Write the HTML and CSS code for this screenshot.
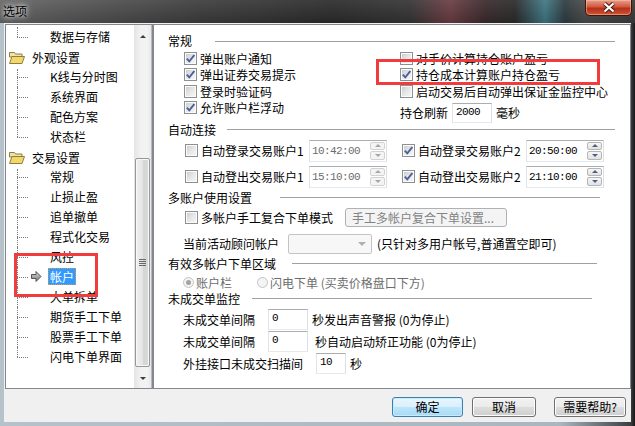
FILE: index.html
```html
<!DOCTYPE html>
<html lang="zh-CN">
  <head>
    <meta charset="UTF-8" />
    <meta name="viewport" content="width=device-width, initial-scale=1.0" />
    <title>选项</title>
    <link rel="stylesheet" href="styles.css">
  </head>

  <body>
    <div class="window">
      <div class="titlebar">
        <span class="title">选项</span>
        <div class="close">
          <svg width="14" height="11" viewBox="0 0 14 11">
            <path d="M2.5 1.5 L11.5 9.5 M11.5 1.5 L2.5 9.5" stroke="#4a1d14" stroke-width="4.2" />
            <path d="M2.5 1.5 L11.5 9.5 M11.5 1.5 L2.5 9.5" stroke="#fff" stroke-width="2.2" />
          </svg>
        </div>
      </div>

      <div class="client">
        <div class="panes">
          <!-- arbol de opciones -->
          <div class="tree">
            <ul class="tree-list">
              <li class="node child last"><span class="label">数据与存储</span></li>
              <li class="node parent">
                <svg class="folder" width="16" height="13" viewBox="0 0 16 13">
                  <path d="M0.5 1.5 h5 l1 1.5 h6.5 v3 h-12.5 z" fill="#efe3a6" stroke="#8d7d44" />
                  <path d="M0.5 12.5 l2.5 -7 h12.5 l-2.5 7 z" fill="#f3d868" stroke="#8d7d44" />
                </svg>
                <span class="label">外观设置</span>
              </li>
              <li class="node child first"><span class="label">K线与分时图</span></li>
              <li class="node child"><span class="label">系统界面</span></li>
              <li class="node child"><span class="label">配色方案</span></li>
              <li class="node child last"><span class="label">状态栏</span></li>
              <li class="node parent">
                <svg class="folder" width="16" height="13" viewBox="0 0 16 13">
                  <path d="M0.5 1.5 h5 l1 1.5 h6.5 v3 h-12.5 z" fill="#efe3a6" stroke="#8d7d44" />
                  <path d="M0.5 12.5 l2.5 -7 h12.5 l-2.5 7 z" fill="#f3d868" stroke="#8d7d44" />
                </svg>
                <span class="label">交易设置</span>
              </li>
              <li class="node child first"><span class="label">常规</span></li>
              <li class="node child"><span class="label">止损止盈</span></li>
              <li class="node child"><span class="label">追单撤单</span></li>
              <li class="node child"><span class="label">程式化交易</span></li>
              <li class="node child"><span class="label">风控</span></li>
              <li class="node child selected">
                <svg class="arrow" width="11" height="11" viewBox="0 0 11 11">
                  <defs>
                    <linearGradient id="gris" x1="0" y1="0" x2="0" y2="1">
                      <stop offset="0" stop-color="#d8d8d8" />
                      <stop offset="1" stop-color="#7a7a7a" />
                    </linearGradient>
                  </defs>
                  <path d="M0.5 3.5 h4.5 v-3 l5 5 l-5 5 v-3 h-4.5 z" fill="url(#gris)" stroke="#555" />
                </svg>
                <span class="label">帐户</span>
              </li>
              <li class="node child"><span class="label">大单拆单</span></li>
              <li class="node child"><span class="label">期货手工下单</span></li>
              <li class="node child"><span class="label">股票手工下单</span></li>
              <li class="node child last"><span class="label">闪电下单界面</span></li>
            </ul>

            <div class="scrollbar">
              <div class="sb-btn sb-up"><i></i></div>
              <div class="sb-track sb-track-top"></div>
              <div class="sb-thumb"><i></i><i></i><i></i><i></i></div>
              <div class="sb-track sb-track-bottom"></div>
              <div class="sb-btn sb-down"><i></i></div>
            </div>
          </div>

          <!-- pagina de la cuenta -->
          <div class="page">
            <div class="group-title rule-general"><span>常规</span><i class="rule"></i></div>
            <div class="general">
              <div class="col col-left">
                <div class="check-row"><span class="cb"><svg width="9" height="9" viewBox="0 0 9 9"><path d="M0.8 4.6 L3.3 7.3 L8.3 1" fill="none" stroke="#4b5f98" stroke-width="1.9" /></svg></span>弹出账户通知</div>
                <div class="check-row"><span class="cb"><svg width="9" height="9" viewBox="0 0 9 9"><path d="M0.8 4.6 L3.3 7.3 L8.3 1" fill="none" stroke="#4b5f98" stroke-width="1.9" /></svg></span>弹出证券交易提示</div>
                <div class="check-row"><span class="cb"></span>登录时验证码</div>
                <div class="check-row"><span class="cb"><svg width="9" height="9" viewBox="0 0 9 9"><path d="M0.8 4.6 L3.3 7.3 L8.3 1" fill="none" stroke="#4b5f98" stroke-width="1.9" /></svg></span>允许账户栏浮动</div>
              </div>
              <div class="col">
                <div class="check-row"><span class="cb"></span>对手价计算持仓账户盈亏</div>
                <div class="check-row"><span class="cb"><svg width="9" height="9" viewBox="0 0 9 9"><path d="M0.8 4.6 L3.3 7.3 L8.3 1" fill="none" stroke="#4b5f98" stroke-width="1.9" /></svg></span>持仓成本计算账户持仓盈亏</div>
                <div class="check-row"><span class="cb"></span>启动交易后自动弹出保证金监控中心</div>
                <div class="field-row refresh">持仓刷新<span class="edit edit-refresh">2000</span>毫秒</div>
              </div>
            </div>

            <div class="group-title rule-auto"><span>自动连接</span><i class="rule"></i></div>
            <div class="auto">
              <div class="auto-row">
                <div class="check-row auto-check"><span class="cb"></span>自动登录交易账户1</div>
                <div class="time disabled"><span class="time-val">10:42:00</span><span class="spin"><i class="up"></i><i class="down"></i></span></div>
                <div class="check-row auto-check second"><span class="cb"><svg width="9" height="9" viewBox="0 0 9 9"><path d="M0.8 4.6 L3.3 7.3 L8.3 1" fill="none" stroke="#4b5f98" stroke-width="1.9" /></svg></span>自动登录交易账户2</div>
                <div class="time"><span class="time-val">20:50:00</span><span class="spin"><i class="up"></i><i class="down"></i></span></div>
              </div>
              <div class="auto-row">
                <div class="check-row auto-check"><span class="cb"></span>自动登出交易账户1</div>
                <div class="time disabled"><span class="time-val">15:10:00</span><span class="spin"><i class="up"></i><i class="down"></i></span></div>
                <div class="check-row auto-check second"><span class="cb"><svg width="9" height="9" viewBox="0 0 9 9"><path d="M0.8 4.6 L3.3 7.3 L8.3 1" fill="none" stroke="#4b5f98" stroke-width="1.9" /></svg></span>自动登出交易账户2</div>
                <div class="time"><span class="time-val">21:10:00</span><span class="spin"><i class="up"></i><i class="down"></i></span></div>
              </div>
            </div>

            <div class="group-title rule-multi"><span>多账户使用设置</span><i class="rule"></i></div>
            <div class="multi-row">
              <div class="check-row multi-check"><span class="cb"></span>多帐户手工复合下单模式</div>
              <span class="btn-disabled">手工多帐户复合下单设置...</span>
            </div>
            <div class="advisor-row">
              当前活动顾问帐户
              <span class="combo"><i></i></span>
              <span class="hint">(只针对多用户帐号,普通置空即可)</span>
            </div>

            <div class="group-title rule-area"><span>有效多帐户下单区域</span><i class="rule"></i></div>
            <div class="radio-row">
              <span class="radio on"></span><span class="radio-text">账户栏</span>
              <span class="radio second"></span><span class="radio-text">闪电下单 (买卖价格盘口下方)</span>
            </div>

            <div class="group-title rule-monitor"><span>未成交单监控</span><i class="rule"></i></div>
            <div class="field-row monitor">未成交单间隔<span class="edit edit-gap">0</span>秒发出声音警报 (0为停止)</div>
            <div class="field-row monitor second">未成交单间隔<span class="edit edit-gap">0</span>秒自动启动矫正功能 (0为停止)</div>
            <div class="field-row monitor">外挂接口未成交扫描间<span class="edit edit-scan">10</span>秒</div>
          </div>
        </div>

        <div class="footer">
          <span class="btn btn-default btn-ok">确定</span>
          <span class="btn btn-cancel">取消</span>
          <span class="btn btn-help">需要帮助?</span>
        </div>
      </div>

      <!-- marcas rojas -->
      <div class="mark mark-tree"></div>
      <div class="mark mark-option"></div>
    </div>
  </body>
</html>
```

FILE: styles.css
```css
body {
  margin: 0;
  font-family: "Noto Sans CJK SC", "Noto Sans", sans-serif;
  font-size: 12px;
  color: #000;
  background: #1c1c1c;
}

.window {
  position: relative;
  width: 635px;
  height: 426px;
  display: flex;
  flex-direction: column;
  background: linear-gradient(90deg, #b6c2ca 0, #aab6be 560px, #3a3e42 631px, #161616 635px);
}

/* barra de titulo */
.titlebar {
  height: 23px;
  flex-shrink: 0;
  display: flex;
  justify-content: space-between;
  background:
    linear-gradient(180deg, rgba(255, 255, 255, 0.08), rgba(0, 0, 0, 0.12)),
    linear-gradient(90deg, #666 0, #555 70px, #3c3c3c 200px, #2b2b2b 330px, #343434 410px, #6a3c42 450px, #3a2a2c 485px, #2a2a2a 515px, #3f7784 545px, #2e3b3f 565px, #4a4a4a 585px, #3a3a3a 635px);
}

.title {
  padding: 3px 0 0 3px;
  line-height: 15px;
  text-shadow: 0 0 4px #fff, 0 0 9px rgba(255, 255, 255, 0.7);
}

.close {
  width: 45px;
  height: 15px;
  margin-right: 3px;
  display: flex;
  align-items: center;
  justify-content: center;
  border: 1px solid #3b1510;
  border-top: none;
  border-radius: 0 0 5px 5px;
  background: linear-gradient(180deg, #e6a08c 0%, #d4573d 45%, #b3311b 55%, #cf5432 100%);
  box-shadow: inset 0 0 0 1px rgba(255, 200, 180, 0.5);
}

.client {
  flex: 1;
  margin: 0 4px 4px 4px;
  background: #f0f0f0;
  display: flex;
  flex-direction: column;
}

.panes {
  display: flex;
  height: 366px;
  padding-top: 1px;
  box-sizing: border-box;
}

/* arbol */
.tree {
  width: 148px;
  margin-left: 1px;
  box-sizing: border-box;
  border: 1px solid #828790;
  background: #fff;
  display: flex;
}

.tree-list {
  flex: 1;
  list-style: none;
  margin: 0;
  padding: 2px 0 0 0;
}

.node {
  position: relative;
  height: 20px;
  line-height: 20px;
  white-space: nowrap;
}

.node .label {
  display: inline-block;
  line-height: 15px;
  padding: 0 1px;
  border: 1px solid transparent;
}

.child {
  padding-left: 42px;
}

.child::before {
  content: "";
  position: absolute;
  left: 11px;
  top: 10px;
  width: 11px;
  border-top: 1px dotted #7a7a7a;
}

.child::after {
  content: "";
  position: absolute;
  left: 11px;
  top: 0;
  height: 20px;
  border-left: 1px dotted #7a7a7a;
}

.child.last::after {
  height: 10px;
}

.child.first::after {
  top: 2px;
  height: 18px;
}

.parent {
  padding-left: 3px;
  display: flex;
  align-items: center;
}

.folder {
  margin-right: 5px;
}

.selected .arrow {
  position: absolute;
  left: 25px;
  top: 4px;
}

.selected .label {
  background: #3399ff;
  color: #fff;
  border: 1px dotted #c8a050;
}

/* barra de desplazamiento */
.scrollbar {
  width: 17px;
  display: flex;
  flex-direction: column;
  background: linear-gradient(90deg, #e4e4e4, #f2f2f2 40%, #f2f2f2 80%, #e8e8e8);
  border-right: 1px solid #b8b8b8;
}

.sb-btn {
  display: flex;
  align-items: center;
  justify-content: center;
}

.sb-up {
  height: 23px;
}

.sb-down {
  height: 20px;
}

.sb-up i {
  border-left: 3px solid transparent;
  border-right: 3px solid transparent;
  border-bottom: 3px solid #3c3c3c;
}

.sb-down i {
  border-left: 3px solid transparent;
  border-right: 3px solid transparent;
  border-top: 3px solid #3c3c3c;
}

.sb-track-top {
  height: 110px;
}

.sb-track-bottom {
  flex: 1;
}

.sb-thumb {
  height: 209px;
  margin: 0 1px;
  box-sizing: border-box;
  border: 1px solid #979797;
  border-radius: 2px;
  background: linear-gradient(90deg, #f1f1f1, #e4e4e4 50%, #d5d5d5 51%, #d9d9d9);
  box-shadow: inset 0 0 0 1px #f8f8f8;
  display: flex;
  flex-direction: column;
  justify-content: center;
  align-items: center;
  gap: 1px;
}

.sb-thumb i {
  width: 7px;
  height: 1px;
  background: #6a6a6a;
}

/* pagina */
.page {
  flex: 1;
  box-sizing: border-box;
  border: 1px solid #828790;
  background: #fff;
  padding: 9px 15px 0 14px;
}

.group-title {
  height: 14px;
  line-height: 14px;
  display: flex;
  align-items: center;
  white-space: nowrap;
}

.rule {
  flex: 1;
  border-top: 1px solid #a0a0a0;
}

.rule-general .rule {
  margin-left: 23px;
}

.rule-auto {
  margin-top: 0;
}

.rule-auto .rule {
  margin-left: 11px;
}

.rule-multi {
  margin-top: 3px;
}

.rule-multi .rule {
  margin-left: 28px;
  margin-right: 15px;
}

.rule-area {
  margin-top: 3px;
}

.rule-area .rule {
  margin-left: 16px;
  margin-right: 18px;
}

.rule-monitor {
  margin-top: 2px;
}

.rule-monitor .rule {
  margin-left: 12px;
  margin-right: 23px;
}

.general {
  display: flex;
  margin-top: 2px;
  padding-left: 16px;
}

.col-left {
  width: 216px;
}

.check-row {
  height: 16.5px;
  display: flex;
  align-items: center;
  white-space: nowrap;
}

.cb {
  width: 13px;
  height: 13px;
  margin-right: 3px;
  flex-shrink: 0;
  box-sizing: border-box;
  border: 1px solid #8e8f8f;
  background: linear-gradient(135deg, #c6c8cb 0%, #e6e7e8 50%, #f8f8f8 100%);
  box-shadow: inset 0 0 0 1px #fbfbfb;
  display: flex;
  align-items: center;
  justify-content: center;
}

.field-row {
  display: flex;
  align-items: center;
  white-space: nowrap;
}

.refresh {
  height: 20px;
  margin-top: 3px;
}

.edit {
  box-sizing: border-box;
  height: 20px;
  line-height: 17px;
  padding-left: 3px;
  border: 1px solid #abadb3;
  border-color: #abadb3 #dbdfe6 #e3e9ef #e2e3ea;
  background: #fff;
  font-family: "Liberation Mono", monospace;
  font-size: 11px;
  letter-spacing: -0.6px;
}

.edit-refresh {
  width: 40px;
  margin: 0 4px;
}

/* auto conexion */
.auto {
  margin-top: 3px;
  padding-left: 17px;
  display: flex;
  flex-direction: column;
  gap: 4px;
}

.auto-row {
  display: flex;
  align-items: center;
  height: 22px;
}

.auto-check {
  width: 124px;
}

.auto-check.second {
  margin-left: 15px;
}

.time {
  width: 78px;
  height: 22px;
  box-sizing: border-box;
  border: 1px solid #abadb3;
  border-color: #abadb3 #dbdfe6 #e3e9ef #e2e3ea;
  background: #fff;
  display: flex;
  align-items: center;
}

.time-val {
  flex: 1;
  padding-left: 2px;
  font-family: "Liberation Mono", monospace;
  font-size: 11px;
  letter-spacing: -0.6px;
}

.time.disabled .time-val {
  color: #6d6d6d;
}

.spin {
  width: 15px;
  height: 18px;
  margin-right: 1px;
  display: flex;
  flex-direction: column;
  gap: 1px;
}

.spin i {
  flex: 1;
  border: 1px solid #b5b5b5;
  border-radius: 2px;
  background: linear-gradient(180deg, #f6f6f6, #e2e2e2);
  display: flex;
  align-items: center;
  justify-content: center;
}

.spin .up::after {
  content: "";
  border-left: 3px solid transparent;
  border-right: 3px solid transparent;
  border-bottom: 3px solid #4e5f86;
}

.spin .down::after {
  content: "";
  border-left: 3px solid transparent;
  border-right: 3px solid transparent;
  border-top: 3px solid #4e5f86;
}

.time.disabled .spin i {
  border-color: #d2d2d2;
  background: #f4f4f4;
}

.time.disabled .spin .up::after {
  border-bottom-color: #a6a6a6;
}

.time.disabled .spin .down::after {
  border-top-color: #a6a6a6;
}

/* multi cuenta */
.multi-row {
  margin-top: 3px;
  height: 20px;
  padding-left: 17px;
  display: flex;
  align-items: center;
}

.multi-check {
  width: 160px;
}

.btn-disabled {
  width: 162px;
  height: 19px;
  box-sizing: border-box;
  border: 1px solid #adb2b5;
  border-radius: 3px;
  background: #f4f4f4;
  color: #838383;
  line-height: 17px;
  padding-left: 6px;
  white-space: nowrap;
}

.advisor-row {
  margin-top: 6px;
  height: 20px;
  padding-left: 15px;
  display: flex;
  align-items: center;
  white-space: nowrap;
}

.combo {
  width: 84px;
  height: 20px;
  margin: 0 5px 0 9px;
  box-sizing: border-box;
  border: 1px solid #c2c4c8;
  border-radius: 2px;
  background: #f7f7f7;
  display: flex;
  align-items: center;
  justify-content: flex-end;
  padding-right: 5px;
}

.combo i {
  border-left: 4px solid transparent;
  border-right: 4px solid transparent;
  border-top: 4px solid #b0b0b0;
}

/* radios */
.radio-row {
  margin-top: 5px;
  height: 14px;
  padding-left: 15px;
  display: flex;
  align-items: center;
  color: #6d6d6d;
  white-space: nowrap;
}

.radio {
  width: 11px;
  height: 11px;
  box-sizing: border-box;
  border-radius: 50%;
  border: 1px solid #c4c4c4;
  background: #f4f4f4;
  margin-right: 2px;
  display: flex;
  align-items: center;
  justify-content: center;
}

.radio.on::after {
  content: "";
  width: 5px;
  height: 5px;
  border-radius: 50%;
  background: #a2a2a2;
}

.radio.second {
  margin-left: 25px;
}

/* monitor */
.monitor {
  height: 21px;
  margin-top: 1px;
  padding-left: 15px;
}

.rule-monitor + .monitor {
  margin-top: 3px;
}

.edit-gap {
  width: 40px;
  height: 21px;
  margin: 0 4px 0 13px;
}

.monitor.second .edit-gap {
  margin-right: 7px;
}

.edit-scan {
  width: 30px;
  height: 21px;
  margin: 0 4px 0 13px;
}

/* botones */
.footer {
  flex: 1;
  display: flex;
  justify-content: flex-end;
  align-items: flex-start;
  padding: 8px 5px 0 0;
}

.btn {
  height: 20px;
  box-sizing: border-box;
  border: 1px solid #707070;
  border-radius: 3px;
  background: linear-gradient(180deg, #f2f2f2 0%, #ebebeb 49%, #dddddd 50%, #cfcfcf 100%);
  box-shadow: inset 0 0 0 1px #fcfcfc;
  text-align: center;
  line-height: 18px;
}

.btn-default {
  border-color: #3c7fb1;
  background: linear-gradient(180deg, #eaf6fd 0%, #d9f0fc 49%, #bee6fd 50%, #a7d9f5 100%);
  box-shadow: inset 0 0 0 1px #c8ecfc;
}

.btn-ok {
  width: 71px;
}

.btn-cancel {
  width: 64px;
  margin-left: 9px;
}

.btn-help {
  width: 72px;
  margin-left: 18px;
}

/* marcas rojas */
.mark {
  position: absolute;
  box-sizing: border-box;
  border: 3px solid #f23c3c;
}

.mark-tree {
  left: 14px;
  top: 253px;
  width: 84px;
  height: 44px;
}

.mark-option {
  left: 376px;
  top: 59px;
  width: 224px;
  height: 26px;
}
```
